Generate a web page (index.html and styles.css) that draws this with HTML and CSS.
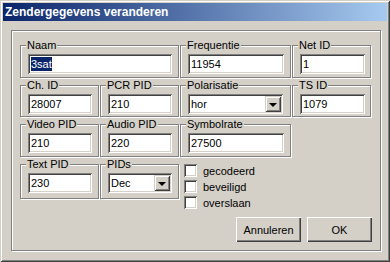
FILE: index.html
```html
<!DOCTYPE html>
<html>
<head>
<meta charset="utf-8">
<link rel="stylesheet" href="styles.css">
</head>
<body>
<div class="window">
  <div class="titlebar">Zendergegevens veranderen</div>
  <div class="panel">
    <div class="grid">
      <div class="group span2"><span class="legend">Naam</span><div class="field w144"><span class="sel">3sat</span></div></div>
      <div class="group"><span class="legend">Frequentie</span><div class="field w96">11954</div></div>
      <div class="group"><span class="legend">Net ID</span><div class="field w65">1</div></div>

      <div class="group"><span class="legend">Ch. ID</span><div class="field w64">28007</div></div>
      <div class="group"><span class="legend">PCR PID</span><div class="field w64">210</div></div>
      <div class="group"><span class="legend">Polarisatie</span><div class="field combo w95"><span class="val">hor</span><span class="drop"><span class="arrow"></span></span></div></div>
      <div class="group"><span class="legend">TS ID</span><div class="field w65">1079</div></div>

      <div class="group"><span class="legend">Video PID</span><div class="field w64">210</div></div>
      <div class="group"><span class="legend">Audio PID</span><div class="field w64">220</div></div>
      <div class="group"><span class="legend">Symbolrate</span><div class="field w96">27500</div></div>
      <div class="empty"></div>

      <div class="group tall"><span class="legend">Text PID</span><div class="field w64">230</div></div>
      <div class="group tall"><span class="legend">PIDs</span><div class="field combo w64"><span class="val">Dec</span><span class="drop"><span class="arrow"></span></span></div></div>
      <div class="checks">
        <label class="check"><span class="box"></span>gecodeerd</label>
        <label class="check"><span class="box"></span>beveiligd</label>
        <label class="check"><span class="box"></span>overslaan</label>
      </div>
    </div>
    <div class="buttons">
      <span class="btn annuleren">Annuleren</span>
      <span class="btn ok">OK</span>
    </div>
  </div>
</div>
</body>
</html>
```
FILE: styles.css
```css
* { box-sizing: border-box; }
html, body { margin: 0; padding: 0; background: #d4d0c8; }
body {
  font-family: "Liberation Sans", Arial, sans-serif;
  font-size: 11px;
  color: #000;
}
.window {
  width: 390px;
  height: 262px;
  background: #d4d0c8;
  padding: 3px;
  display: flex;
  flex-direction: column;
  box-shadow: inset 1px 1px #d4d0c8, inset -1px -1px #404040, inset 2px 2px #fff, inset -2px -2px #808080;
}
.titlebar {
  height: 18px;
  line-height: 18px;
  padding-left: 2px;
  color: #fff;
  font-weight: bold;
  font-size: 12px;
  background: linear-gradient(to right, #0a246a, #a6caf0);
  white-space: nowrap;
}
.panel {
  flex: 1;
  margin: 9px 6px 8px 8px;
  border: 1px solid #808080;
  box-shadow: inset 1px 1px #fff, 1px 1px #fff;
  padding: 14px 0 0 8px;
}
.grid {
  display: grid;
  grid-template-columns: 80px 80px 112px 80px;
  grid-template-rows: 33px 32px 33px 35px;
  row-gap: 7px;
}
.group {
  width: calc(100% - 1px);
  border: 1px solid #808080;
  box-shadow: inset 1px 1px #fff, 1px 1px #fff;
  padding-left: 7px;
}
.span2 { grid-column: span 2; }
.legend {
  display: block;
  width: fit-content;
  margin: -7px 0 0 -2px;
  padding: 0 1px;
  line-height: 13px;
  background: #d4d0c8;
}
.field {
  margin-top: 2px;
  height: 20px;
  line-height: 20px;
  background: #fff;
  padding: 0 3px;
  white-space: nowrap;
  box-shadow: inset 1px 1px #808080, inset -1px -1px #fff, inset 2px 2px #404040, inset -2px -2px #d4d0c8;
}
.w144 { width: 144px; }
.w96 { width: 96px; }
.w95 { width: 95px; }
.w65 { width: 65px; }
.w64 { width: 64px; }
.sel {
  background: #0a246a;
  color: #fff;
  padding: 1px 0;
}
.combo {
  display: flex;
  align-items: center;
  justify-content: space-between;
  padding: 0 2px 0 3px;
}
.drop {
  width: 16px;
  height: 16px;
  background: #d4d0c8;
  box-shadow: inset 1px 1px #d4d0c8, inset -1px -1px #404040, inset 2px 2px #fff, inset -2px -2px #808080;
  display: flex;
  align-items: center;
  justify-content: center;
}
.arrow {
  width: 0;
  height: 0;
  border-left: 4px solid transparent;
  border-right: 4px solid transparent;
  border-top: 4px solid #000;
  margin-top: 1px;
}
.checks {
  display: flex;
  flex-direction: column;
  gap: 3px;
  padding: 0 0 0 4px;
}
.check {
  display: flex;
  align-items: center;
  gap: 6px;
  height: 13px;
}
.box {
  width: 13px;
  height: 13px;
  background: #fff;
  box-shadow: inset 1px 1px #808080, inset -1px -1px #fff, inset 2px 2px #404040, inset -2px -2px #d4d0c8;
}
.buttons {
  display: flex;
  justify-content: flex-end;
  gap: 6px;
  margin-top: 18px;
  padding-right: 8px;
}
.btn {
  width: 65px;
  height: 25px;
  display: flex;
  align-items: center;
  justify-content: center;
  background: #d4d0c8;
  box-shadow: inset 1px 1px #fff, inset -1px -1px #404040, inset -2px -2px #808080;
}
```
